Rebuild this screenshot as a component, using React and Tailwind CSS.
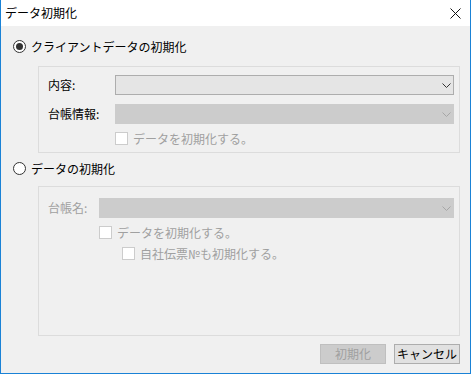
import React from 'react';

const Radio = ({ checked, label }) => (
  <div className="flex items-center h-[13px] ml-[12px]">
    <span className="w-[13px] h-[13px] rounded-full border border-[#333333] bg-white flex items-center justify-center">
      {checked && <span className="w-[7px] h-[7px] rounded-full bg-[#333333]"></span>}
    </span>
    <span className="ml-[5px] text-[12px] leading-none text-black">{label}</span>
  </div>
);

const Chevron = ({ color }) => (
  <svg width="9" height="5" viewBox="0 0 9 5" className="mr-[2px]">
    <path d="M0.5 0.5 L4.5 4.5 L8.5 0.5" fill="none" stroke={color} strokeWidth="1" />
  </svg>
);

const Combo = ({ enabled }) =>
  enabled ? (
    <div className="flex-1 h-[20px] border border-[#adadad] bg-[#e5e5e5] flex items-center justify-end">
      <Chevron color="#333333" />
    </div>
  ) : (
    <div className="flex-1 h-[20px] border border-[#cccccc] bg-[#cccccc] flex items-center justify-end">
      <Chevron color="#a6a6a6" />
    </div>
  );

const Check = ({ label, className = '' }) => (
  <div className={`flex items-center h-[13px] ${className}`}>
    <span className="w-[13px] h-[13px] border border-[#cccccc] bg-white"></span>
    <span className="ml-[5px] text-[12px] leading-none text-[#a0a0a0]">{label}</span>
  </div>
);

export default function App() {
  return (
    <div className="w-[471px] h-[374px] flex flex-col bg-[#f0f0f0] border-l border-r border-b border-[#1a82d6] font-['Meiryo_UI','Noto_Sans_CJK_JP',sans-serif] select-none">
      {/* Title bar */}
      <div className="h-[26px] bg-white flex items-center justify-between pl-[4px] pr-[9px]">
        <span className="text-[12px] leading-none text-black">データ初期化</span>
        <svg width="11" height="11" viewBox="0 0 11 11">
          <path d="M0.5 0.5 L10.5 10.5 M10.5 0.5 L0.5 10.5" stroke="#111111" strokeWidth="1" />
        </svg>
      </div>

      {/* Content */}
      <div className="flex flex-col pt-[14px]">
        <Radio checked label="クライアントデータの初期化" />

        <div className="mt-[13px] ml-[37px] w-[422px] border border-[#dcdcdc] pt-[8px] pb-[7px] pl-[9px] pr-[5px] flex flex-col">
          <div className="flex items-center">
            <span className="w-[67px] text-[12px] leading-none text-black">内容:</span>
            <Combo enabled />
          </div>
          <div className="flex items-center mt-[9px]">
            <span className="w-[67px] text-[12px] leading-none text-black">台帳情報:</span>
            <Combo />
          </div>
          <Check label="データを初期化する。" className="mt-[8px] ml-[67px]" />
        </div>

        <div className="mt-[9px]">
          <Radio label="データの初期化" />
        </div>

        <div className="mt-[11px] ml-[37px] w-[422px] h-[150px] border border-[#dcdcdc] pt-[11px] pl-[9px] pr-[5px] flex flex-col">
          <div className="flex items-center">
            <span className="w-[51px] text-[12px] leading-none text-[#a0a0a0]">台帳名:</span>
            <Combo />
          </div>
          <Check label="データを初期化する。" className="mt-[8px] ml-[51px]" />
          <Check label="自社伝票№も初期化する。" className="mt-[8px] ml-[74px]" />
        </div>

        <div className="mt-[8px] flex justify-end gap-[8px] mr-[10px]">
          <div className="w-[66px] h-[20px] border border-[#bfbfbf] bg-[#cccccc] flex items-center justify-center text-[12px] leading-none text-[#a0a0a0]">
            初期化
          </div>
          <div className="w-[66px] h-[20px] border border-[#adadad] bg-[#e1e1e1] flex items-center justify-center text-[12px] leading-none text-black">
            キャンセル
          </div>
        </div>
      </div>
    </div>
  );
}
